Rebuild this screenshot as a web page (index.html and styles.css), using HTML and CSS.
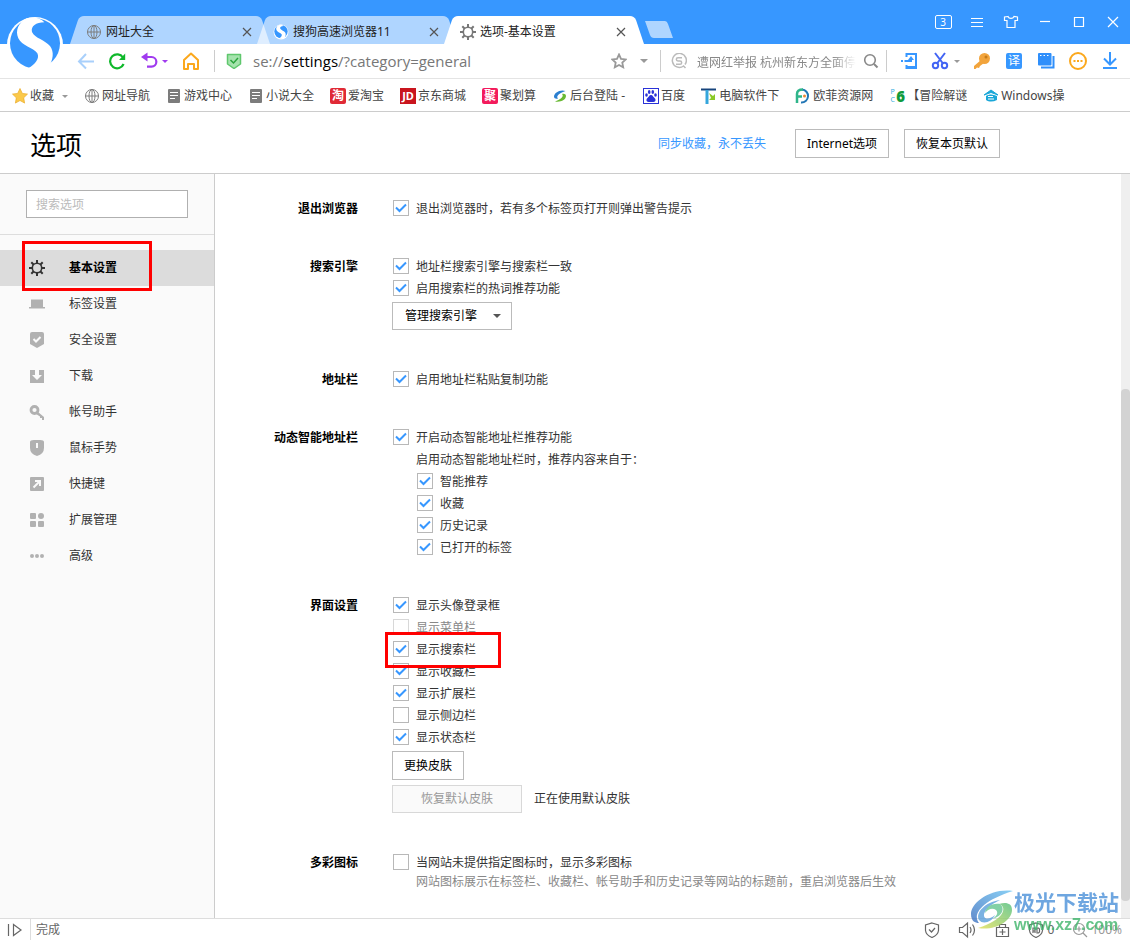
FILE: index.html
```html
<!DOCTYPE html>
<html lang="zh-CN">
<head>
<meta charset="utf-8">
<title>选项-基本设置</title>
<link rel="stylesheet" href="styles.css">
</head>
<body>
<svg class="defs" aria-hidden="true">
  <defs>
    <symbol id="globe" viewBox="0 0 16 16"><g fill="none" stroke="#7c7c7c"><circle cx="8" cy="8" r="6.500"/><ellipse cx="8" cy="8" rx="3" ry="6.500"/><path d="M8 1.500v13M1.500 8h13"/></g></symbol>
    <symbol id="close" viewBox="0 0 12 12"><path d="M2 2l8 8M10 2l-8 8" fill="none" stroke="#555" stroke-width="1.200"/></symbol>
    <symbol id="doc" viewBox="0 0 16 16"><rect x="2" y="1" width="12" height="14" rx="1" fill="#7c7c7c"/><path d="M4 4.500h8M4 7.500h8M4 10.500h5" stroke="#fff"/></symbol>
    <symbol id="caret" viewBox="0 0 8 6"><path d="M0 1h8L4 5z" fill="currentColor"/></symbol>
    <symbol id="gear" viewBox="0 0 16 16"><g fill="none" stroke="currentColor"><circle cx="8" cy="8" r="4.700" stroke-width="1.600"/><path d="M8 0v3M8 13v3M0 8h3M13 8h3M2.300 2.300l2.200 2.200M11.500 11.500l2.200 2.200M2.300 13.700l2.200-2.200M11.500 4.500l2.200-2.200" stroke-width="2"/></g></symbol>
    <symbol id="sogou" viewBox="15 15 180 180"><circle cx="105" cy="105" r="84" fill="#fff"/><circle cx="105" cy="100" r="75" fill="#3797ff"/><path d="M80 25C55 38 45 62 55 85c10 23 45 27 57 45 8 15-7 35-27 44l33 8 27-10c15-22 18-47 5-64-15-18-45-23-54-42-4-18 12-28 37-29-13-15-33-17-53-12z" fill="#fff"/></symbol>
  </defs>
</svg>
<div class="browser">
  <header class="titlebar">
    <nav class="tabs" aria-label="标签页">
      <div class="tab"><svg class="i16"><use href="#globe"/></svg><span>网址大全</span><button aria-label="关闭"><svg class="i12"><use href="#close"/></svg></button></div>
      <div class="tab"><svg class="i16"><use href="#sogou"/></svg><span>搜狗高速浏览器11</span><button aria-label="关闭"><svg class="i12"><use href="#close"/></svg></button></div>
      <div class="tab active"><svg class="i16"><use href="#gear"/></svg><span>选项-基本设置</span><button aria-label="关闭"><svg class="i12"><use href="#close"/></svg></button></div>
      <button class="newtab" aria-label="新建标签"></button>
    </nav>
    <div class="window-buttons">
      <button class="count"><span>3</span></button>
      <button aria-label="菜单"><svg class="i16" viewBox="0 0 16 16"><path d="M2 4.500h12M2 8.500h12M2 12.500h12"/></svg></button>
      <button aria-label="皮肤"><svg class="i16" viewBox="0 0 16 16"><path d="M5 2.500L1.500 3v3.500H4v7h8v-7h2.500V3L11 2.500C10 5 6 5 5 2.500z"/></svg></button>
      <button aria-label="最小化"><svg class="i16" viewBox="0 0 16 16"><path d="M3 7.500h10"/></svg></button>
      <button aria-label="最大化"><svg class="i16" viewBox="0 0 16 16"><path d="M3.500 3.500h9v9h-9z"/></svg></button>
      <button aria-label="关闭窗口"><svg class="i16" viewBox="0 0 16 16"><path d="M3 3l10 10M13 3L3 13"/></svg></button>
    </div>
  </header>
  <svg class="logo" viewBox="0 0 60 60"><use href="#sogou"/></svg>

  <div class="toolbar">
    <button class="nav" aria-label="后退"><svg class="i18" viewBox="0 0 18 18"><path d="M17 9.500H2M9 2L2 9.500l7 7" fill="none" stroke="#a9d0fb" stroke-width="2"/></svg></button>
    <button class="nav" aria-label="刷新"><svg class="i18" viewBox="0 0 18 18"><path d="M15.600 12A7 7 0 1 1 15 5.500" fill="none" stroke="#0fb82b" stroke-width="2.200"/><path d="M17.200 1.500V8H11z" fill="#0fb82b"/></svg></button>
    <button class="nav undo" aria-label="恢复"><svg class="i18" viewBox="0 0 18 18"><path d="M6 5h5.500a4.800 4.800 0 0 1 0 9.700H7" fill="none" stroke="#a03bef" stroke-width="2.200"/><path d="M1 5l6.500-4.500v9z" fill="#a03bef"/></svg><svg class="caret"><use href="#caret"/></svg></button>
    <button class="nav" aria-label="主页"><svg class="i18" viewBox="0 0 18 18"><path d="M2 8L9 1.500 16 8v9h-4v-5H6v5H2z" fill="none" stroke="#fba81d" stroke-width="2" stroke-linejoin="round"/></svg></button>
    <span class="rule"></span>
    <div class="address">
      <svg class="i16" viewBox="0 0 16 16"><path d="M1.500 1.500h13v9.500L8 15.500 1.500 11z" fill="#a5e3ad" stroke="#5fc76d" stroke-width="1.500" stroke-linejoin="round"/><path d="M4.500 7l3 3 4.500-5" fill="none" stroke="#2aa43c" stroke-width="1.500"/></svg>
      <div class="url" role="textbox" contenteditable="true" aria-label="地址" spellcheck="false">se://<b>settings</b>/?category=general</div>
      <button aria-label="收藏"><svg class="i16" viewBox="0 0 16 16"><path d="M8 1.500l2 4.300 4.700.6-3.400 3.200.9 4.700L8 12l-4.200 2.300.9-4.700L1.300 6.400 6 5.800z" fill="none" stroke="#999" stroke-width="1.800"/></svg></button>
      <button class="drop" aria-label="展开"><svg class="caret"><use href="#caret"/></svg></button>
    </div>
    <span class="rule"></span>
    <div class="search">
      <svg class="i16" viewBox="0 0 16 16"><path d="M14.500 15l-2-2A7 7 0 1 1 14 11.500M11 4.700H7a1.600 1.600 0 0 0 0 3.300h2a1.600 1.600 0 0 1 0 3.300H5" fill="none" stroke="#bbb" stroke-width="1.500"/></svg>
      <input type="text" aria-label="搜索" placeholder="遭网红举报 杭州新东方全面停课">
      <button aria-label="搜索"><svg class="i16" viewBox="0 0 16 16"><circle cx="7" cy="7" r="5.300" fill="none" stroke="#888" stroke-width="1.600"/><path d="M11 11l3.500 3.500" stroke="#888" stroke-width="2"/></svg></button>
    </div>
    <span class="rule"></span>
    <div class="extensions">
      <button aria-label="发送到手机"><svg class="i18" viewBox="0 0 18 18"><path d="M6.500 5V2H16v14H6.500v-3M6.500 15H16" fill="none" stroke="#3797ff" stroke-width="2"/><path d="M1 9h2M4.500 9H11V7" fill="none" stroke="#3797ff" stroke-width="2"/><path d="M8 8l3-4 3 4z" fill="#3797ff"/></svg></button>
      <button class="wide" aria-label="截图"><svg class="i18" viewBox="0 0 18 18"><path d="M4 1l8 10.500M14 1L6 11.500" stroke="#4264f4" stroke-width="2" fill="none"/><circle cx="4.500" cy="13.500" r="2.700" fill="none" stroke="#4264f4" stroke-width="2"/><circle cx="13.500" cy="13.500" r="2.700" fill="none" stroke="#4264f4" stroke-width="2"/></svg><svg class="caret"><use href="#caret"/></svg></button>
      <button aria-label="密码"><svg class="i18" viewBox="0 0 18 18"><circle cx="11.500" cy="6.500" r="5.500" fill="#f2a43c"/><path d="M8 8l3 3-4 3-1 2-2-.5-1.500 1.500H1V14z" fill="#f2a43c"/><circle cx="13" cy="5" r="1.500" fill="#c67b17"/></svg></button>
      <button aria-label="翻译"><span class="translate">译</span></button>
      <button aria-label="分屏"><svg class="i18" viewBox="0 0 18 18"><path d="M4 15.500h12.500V4" fill="none" stroke="#2f8ffb" stroke-width="2"/><rect x="1" y="1" width="13.500" height="12.500" rx="1" fill="#2f8ffb"/><path d="M3 3.500h1.500M6.500 3.500H8M10 3.500h1.500" stroke="#fff"/></svg></button>
      <button aria-label="更多"><svg class="i18" viewBox="0 0 18 18"><circle cx="9" cy="9" r="8" fill="none" stroke="#fba81d" stroke-width="2"/><path d="M4.500 9h2M8 9h2M11.500 9h2" stroke="#fba81d" stroke-width="2"/></svg></button>
      <button aria-label="下载"><svg class="i18" viewBox="0 0 18 18"><path d="M9 0v12M3 6.500l6 6 6-6M2 16h14" fill="none" stroke="#3797ff" stroke-width="2"/></svg></button>
    </div>
  </div>

  <nav class="bookmarks" aria-label="收藏栏">
    <a href="#"><svg class="i16" viewBox="0 0 16 16"><path d="M8 .5l2.300 4.900 5.200.7-3.800 3.700.9 5.300L8 12.500l-4.600 2.600.9-5.300L.5 6.100l5.200-.7z" fill="#fbc94a" stroke="#e9aa27" stroke-width=".7"/></svg>收藏<svg class="caret fold"><use href="#caret"/></svg></a>
    <a href="#"><svg class="i16"><use href="#globe"/></svg>网址导航</a>
    <a href="#"><svg class="i16"><use href="#doc"/></svg>游戏中心</a>
    <a href="#"><svg class="i16"><use href="#doc"/></svg>小说大全</a>
    <a href="#"><span class="fav tao">淘</span>爱淘宝</a>
    <a href="#"><span class="fav jd">JD</span>京东商城</a>
    <a href="#"><span class="fav ju">聚</span>聚划算</a>
    <a class="login" href="#"><svg class="i16" viewBox="0 0 16 16"><path d="M13.500 3C8 1 2 5 2 8.500c0 2 2 2.500 4 2-2-2 0-5 7.500-7.500z" fill="#2b7fd0"/><path d="M3 13.500c6 1 11-2 11-5.500 0-2-2-2.500-4-2 2 2 0 5-7 7.500z" fill="#69b934"/></svg>后台登陆 -</a>
    <a href="#"><svg class="i16" viewBox="0 0 16 16"><rect x=".5" y=".5" width="15" height="15" fill="#fff" stroke="#2a32d8"/><g fill="#2a32d8"><ellipse cx="3.500" cy="7" rx="1.300" ry="1.800"/><ellipse cx="6.200" cy="4" rx="1.300" ry="1.900"/><ellipse cx="9.800" cy="4" rx="1.300" ry="1.900"/><ellipse cx="12.500" cy="7" rx="1.300" ry="1.800"/><path d="M8 7c2 0 2 2 3.500 3s1.500 4-1 4H5.500c-2.500 0-2.500-3-1-4S6 7 8 7z"/></g></svg>百度</a>
    <a href="#"><svg class="i16" viewBox="0 0 16 16"><path d="M0 1.500h15" stroke="#17447c" stroke-width="2"/><path d="M6 2v14" stroke="#35a6dc" stroke-width="3"/><path d="M8 5l4 3 2-2v6H8l2-2z" fill="#8bc926"/></svg>电脑软件下</a>
    <a href="#"><svg class="i16" viewBox="0 0 16 16"><path d="M7 1.500a6.500 6.500 0 1 1-1 13" fill="none" stroke="#2276b5" stroke-width="2"/><path d="M2 15V6c0-4 3-4.500 6-4.500M2 8.500h5" fill="none" stroke="#2fb58a" stroke-width="2.500"/><circle cx="9.500" cy="8" r="1.500" fill="#f08735"/></svg>欧菲资源网</a>
    <a href="#"><span class="fav pc"><small>P<br>C</small><b>6</b></span>【冒险解谜</a>
    <a href="#"><svg class="i16" viewBox="0 0 16 16"><path d="M1 7l7-5 7 5-7-2.500z" fill="#1aa7d8" stroke="#1aa7d8"/><path d="M3 8c3-2 7-2 11 0v4c-4 2-8 2-11 0z" fill="#1aa7d8"/><path d="M5 8.500h5M5 11h6" stroke="#fff"/></svg>Windows操</a>
  </nav>

  <div class="page-head">
    <h1>选项</h1>
    <a href="#">同步收藏，永不丢失</a>
    <button class="btn">Internet选项</button>
    <button class="btn">恢复本页默认</button>
  </div>

  <div class="body">
    <aside class="sidebar">
      <div class="find"><input type="text" placeholder="搜索选项" aria-label="搜索选项"></div>
      <nav class="menu" aria-label="选项分类">
        <a class="current" href="#"><svg class="i16"><use href="#gear"/></svg>基本设置<i class="mark"></i></a>
        <a href="#"><svg class="i16" viewBox="0 0 16 16"><path d="M2 3.500h12v7.500h2v1.500H0V11h2z"/></svg>标签设置</a>
        <a href="#"><svg class="i16" viewBox="0 0 16 16"><path d="M1 2q0-2 2-2h10q2 0 2 2v10l-7 4-7-4z"/><path class="cut" d="M4.500 7L7 9.500 11.500 5"/></svg>安全设置</a>
        <a href="#"><svg class="i16" viewBox="0 0 16 16"><path d="M1 2h14v13H1z"/><path d="M6 2h4v5h3l-5 5-5-5h3z" fill="#fafafa"/></svg>下载</a>
        <a href="#"><svg class="i16" viewBox="0 0 16 16"><circle cx="5.500" cy="6" r="3.500" fill="none" stroke="#b1b1b1" stroke-width="2.800"/><path d="M7 10l2-2 6 5v3h-2v-2h-2v-1.500z"/></svg>帐号助手</a>
        <a href="#"><svg class="i16" viewBox="0 0 16 16"><path d="M1 2q0-2 4-2h6q4 0 4 2v6q0 6-7 8-7-2-7-8z"/><path class="cut" d="M8 3v5"/></svg>鼠标手势</a>
        <a href="#"><svg class="i16" viewBox="0 0 16 16"><rect x="1" y="1" width="14" height="14" rx="1"/><path class="cut" d="M4.500 11.500L10.500 5.500M6 5h5v5"/></svg>快捷键</a>
        <a href="#"><svg class="i16" viewBox="0 0 16 16"><rect x="1" y="1" width="6" height="6" rx="1"/><circle cx="12" cy="4" r="3"/><rect x="1" y="9" width="6" height="6" rx="1"/><rect x="9" y="9" width="6" height="6" rx="1"/></svg>扩展管理</a>
        <a href="#"><svg class="i16" viewBox="0 0 16 16"><circle cx="3" cy="8" r="2"/><circle cx="8" cy="8" r="2"/><circle cx="13" cy="8" r="2"/></svg>高级</a>
      </nav>
    </aside>

    <main class="settings">
      <section><h2>退出浏览器</h2><div>
        <label><input type="checkbox" checked>退出浏览器时，若有多个标签页打开则弹出警告提示</label>
      </div></section>
      <section><h2>搜索引擎</h2><div>
        <label><input type="checkbox" checked>地址栏搜索引擎与搜索栏一致</label>
        <label><input type="checkbox" checked>启用搜索栏的热词推荐功能</label>
        <select class="engine" aria-label="管理搜索引擎"><option>管理搜索引擎</option></select>
      </div></section>
      <section><h2>地址栏</h2><div>
        <label><input type="checkbox" checked>启用地址栏粘贴复制功能</label>
      </div></section>
      <section><h2>动态智能地址栏</h2><div>
        <label><input type="checkbox" checked>开启动态智能地址栏推荐功能</label>
        <div class="sub">
          <p>启用动态智能地址栏时，推荐内容来自于：</p>
          <label><input type="checkbox" checked>智能推荐</label>
          <label><input type="checkbox" checked>收藏</label>
          <label><input type="checkbox" checked>历史记录</label>
          <label><input type="checkbox" checked>已打开的标签</label>
        </div>
      </div></section>
      <section><h2>界面设置</h2><div>
        <label><input type="checkbox" checked>显示头像登录框</label>
        <label class="off"><input type="checkbox" disabled>显示菜单栏</label>
        <label><input type="checkbox" checked>显示搜索栏<i class="mark"></i></label>
        <label><input type="checkbox" checked>显示收藏栏</label>
        <label><input type="checkbox" checked>显示扩展栏</label>
        <label><input type="checkbox">显示侧边栏</label>
        <label><input type="checkbox" checked>显示状态栏</label>
        <button class="btn skin">更换皮肤</button>
        <div class="reset"><button class="btn" disabled>恢复默认皮肤</button><span>正在使用默认皮肤</span></div>
      </div></section>
      <section><h2>多彩图标</h2><div>
        <label><input type="checkbox">当网站未提供指定图标时，显示多彩图标</label>
        <p class="note">网站图标展示在标签栏、收藏栏、帐号助手和历史记录等网站的标题前，重启浏览器后生效</p>
      </div></section>
    </main>
    <div class="scrollbar"><span></span></div>
  </div>

  <footer class="status">
    <button class="panel" aria-label="侧边栏"><svg class="i16" viewBox="0 0 16 16"><path d="M1.500 2v12M6.500 2.500l7.500 5.500-7.500 5.500z"/></svg></button>
    <span class="state">完成</span>
    <svg class="i16" viewBox="0 0 16 16"><path d="M8 1l6.500 2v5.500Q14 13 8 15.500 2 13 1.500 8.500V3zM5 7.500L7.500 10 11 6"/></svg>
    <svg class="i18" viewBox="0 0 18 18"><path d="M1.500 6.500h3l5-4.500v14l-5-4.500h-3zM12 6q2 3 0 6M14.500 3.500q4 5.500 0 11"/></svg>
    <svg class="i16" viewBox="0 0 16 16"><path d="M2.500 5.500h12v9h-12zM5.500 5.500v-3h6v3M5.500 10h6M8.500 7v6"/></svg>
    <span class="pair"><svg class="i16" viewBox="0 0 16 16"><path d="M8 1l6.500 2v5.500Q14 13 8 15.500 2 13 1.500 8.500V3zM5 11V6h2v5M5 9h2M9 6v5h1.500l1-1V7l-1-1z"/></svg>0</span>
    <span class="pair zoom"><svg class="i16" viewBox="0 0 16 16"><path d="M12.500 7a5.500 5.500 0 1 1-11 0 5.500 5.500 0 1 1 11 0M11 11l4 4M4.500 7h5M7 4.500v5"/></svg>100%</span>
  </footer>

  <div class="watermark">
    <svg viewBox="0 0 44 42">
      <defs>
        <linearGradient id="wb" x1="0" y1="1" x2="1" y2="0"><stop offset="0" stop-color="#3a6fc0"/><stop offset="1" stop-color="#6dc4f2"/></linearGradient>
        <linearGradient id="wg" x1="0" y1="1" x2="1" y2="0"><stop offset="0" stop-color="#e3df55"/><stop offset="1" stop-color="#4fbf7c"/></linearGradient>
      </defs>
      <path d="M43 2C20-1 1 14 1 25c0 7 4 9 8 9-6-7-1-21 34-32z" fill="url(#wb)"/>
      <path d="M30 11C15 13 5 24 9 31c4 5 13 2 16-5-4 4-10 5-11 1-1-5 7-12 16-16z" fill="#5a9fdc"/>
      <path d="M8 39c17 3 34-7 34-18 0-7-6-8-13-6 9 3 5 16-21 24z" fill="url(#wg)"/>
      <path d="M30 15c-9-1-14 3-15 9 4-5 8-5 11-3 3 3 0 7-4 9 9-2 14-10 8-15z" fill="#65c690"/>
    </svg>
    <div><strong>极光下载站</strong><em>www.xz7.com</em></div>
  </div>
</div>
</body>
</html>
```
FILE: styles.css
```css
* { box-sizing: border-box; }
body {
  margin: 0;
  font: 12px/22px "Noto Sans", "Noto Sans CJK SC", sans-serif;
  color: #333;
  background: #fff;
}
button, input, select { font: inherit; color: inherit; margin: 0; }
button { padding: 0; border: 0; background: none; display: flex; align-items: center; justify-content: center; }
a { color: inherit; text-decoration: none; }
h1, h2, p { margin: 0; }
svg { flex: none; display: block; }
.defs { position: absolute; width: 0; height: 0; }
.i12 { width: 12px; height: 12px; }
.i16 { width: 16px; height: 16px; }
.i18 { width: 18px; height: 18px; }
.caret { width: 6px; height: 5px; color: #999; }

.browser { position: relative; display: flex; flex-direction: column; height: 100vh; overflow: hidden; }

/* title bar */
.titlebar { flex: none; display: flex; align-items: flex-end; justify-content: space-between; height: 44px; padding-left: 70px; background: #3797ff; }
.tabs { display: flex; align-items: flex-end; }
.tab {
  display: flex; align-items: center; gap: 4px;
  width: 200px; height: 28px; padding: 3px 17px 0 16px;
  background: rgba(255, 255, 255, .6);
  clip-path: path("M0 28L8 4Q10 0 14 0H186Q190 0 192 4L200 28Z");
  color: #222;
}
.tab + .tab { margin-left: -13px; }
.tab.active { background: #fff; position: relative; }
.tab.active .i16 { color: #777; }
.tab span { flex: 1; white-space: nowrap; }
.newtab { width: 28px; height: 17px; margin: 0 0 6px 1px; background: #afd5ff; clip-path: path("M0 0H20Q22 0 23 3L28 17H9Q6 17 5 14Z"); }
.window-buttons { display: flex; height: 44px; }
.window-buttons button { width: 34px; }
.window-buttons svg { fill: none; stroke: #fff; stroke-width: 1.200; }
.window-buttons .count span { width: 17px; height: 14px; border: 1px solid #fff; border-radius: 2px; color: #fff; font-size: 10px; line-height: 12px; }
.logo { position: absolute; left: 5px; top: 15px; width: 60px; height: 60px; z-index: 2; }

/* toolbar */
.toolbar { flex: none; display: flex; align-items: center; height: 35px; padding: 0 4px 0 71px; border-bottom: 1px solid #e4e4e4; }
.nav { width: 30px; height: 30px; margin-right: 1px; }
.undo { width: 42px; gap: 4px; color: #a03bef; }
.undo .caret { color: #a03bef; }
.rule { width: 1px; height: 22px; margin-left: 7px; background: #ccc; }
.address { flex: 1; display: flex; align-items: center; min-width: 0; padding-left: 11px; }
.url { flex: 1; margin-left: 11px; font-family: "Open Sans", "Noto Sans", sans-serif; font-size: 15px; color: #777; white-space: nowrap; outline: 0; }
.url b { font-weight: 400; color: #000; }
.drop { width: 16px; margin: 0 1px 0 9px; }
.drop .caret { width: 8px; height: 6px; }
.search { display: flex; align-items: center; width: 218px; padding-left: 10px; }
.search input { flex: 1; min-width: 0; height: 24px; padding: 2px 0 0; border: 0; outline: 0; margin: 0 7px 0 10px; background: none; mask-image: linear-gradient(90deg, #000 85%, transparent); }
.search input::placeholder { color: #888; opacity: 1; }
.extensions { display: flex; margin-left: 6px; }
.extensions button { width: 32px; height: 30px; }
.extensions .wide { width: 41px; gap: 5px; }
.translate { width: 16px; height: 16px; border-radius: 2px; background: #3797ff; color: #fff; line-height: 16px; }

/* bookmarks */
.bookmarks { flex: none; display: flex; align-items: center; gap: 16px; height: 33px; padding: 2px 0 0 12px; border-bottom: 1px solid #ccc; white-space: nowrap; color: #444; }
.bookmarks a { display: flex; align-items: center; gap: 2px; }
.bookmarks .login { padding-right: 2px; }
.fold { margin-left: 6px; }
.fav { width: 16px; height: 16px; border-radius: 2px; color: #fff; line-height: 16px; text-align: center; font-weight: 700; }
.tao { background: #e02a36; }
.jd { background: #c9151e; border-radius: 0; font-size: 11px; }
.ju { background: #f31b5c; }
.pc { display: flex; align-items: center; color: #109a3c; font-size: 15px; }
.pc small { width: 7px; font-size: 7px; line-height: 8px; font-weight: 400; color: #35aee0; }

/* options header */
.page-head { flex: none; display: flex; align-items: center; height: 62px; padding: 2px 130px 0 30px; border-bottom: 1px solid #ccc; }
.page-head h1 { flex: 1; font-size: 26px; line-height: 36px; font-weight: 400; color: #000; padding-top: 2px; }
.page-head a { color: #3797ff; margin-right: 14px; }
.page-head .btn { margin-left: 15px; }
.btn { height: 29px; padding: 0 11px; border: 1px solid #bbb; background: #fff; color: #000; white-space: nowrap; }
.btn:disabled { height: 28px; border-color: #d8d8d8; background: #fafafa; color: #999; }

/* sidebar */
.body { flex: 1; display: flex; min-height: 0; }
.sidebar { flex: none; width: 215px; background: #fafafa; border-right: 1px solid #ccc; }
.find { padding: 16px 26px; border-bottom: 1px solid #ddd; }
.find input { display: block; width: 100%; height: 28px; padding: 0 9px; border: 1px solid #b0b0b0; background: #fff; outline: 0; }
.find input::placeholder { color: #bbb; opacity: 1; }
.menu { padding-top: 15px; }
.menu a { position: relative; display: flex; align-items: center; gap: 24px; height: 36px; padding-left: 29px; }
.menu svg { fill: #b1b1b1; }
.menu .cut { fill: none; stroke: #fafafa; stroke-width: 2; }
.menu .current { background: #dcdcdc; color: #000; font-weight: 700; }
.menu .current svg { color: #333; }
.mark { position: absolute; border: 3px solid #f00; z-index: 1; pointer-events: none; }
.menu .mark { left: 22px; top: -9px; width: 130px; height: 50px; }

/* settings */
.settings { flex: 1; min-width: 0; padding-top: 23px; overflow: hidden; display: flex; flex-direction: column; gap: 36px; }
.settings section { display: grid; grid-template-columns: 143px 1fr; column-gap: 34px; }
.settings h2 { height: 22px; font-size: 12px; line-height: 24px; text-align: right; color: #000; }
.settings label { position: relative; display: flex; align-items: flex-start; gap: 7px; width: max-content; height: 22px; padding-left: 1px; line-height: 24px; }
.settings input { appearance: none; width: 16px; height: 16px; margin-top: 3px; border: 1px solid #b8b8b8; background: #fff; }
.settings input:checked { background: url("data:image/svg+xml,%3Csvg xmlns='http://www.w3.org/2000/svg' viewBox='0 0 14 14'%3E%3Cpath d='M2 6.500l3.500 3.500L12 3.500' fill='none' stroke='%233797ff' stroke-width='2'/%3E%3C/svg%3E") center / 14px 14px no-repeat; }
.settings .off { color: #888; }
.settings .off input { border-color: #d8d8d8; }
.settings .mark { left: -7px; top: -6px; width: 116px; height: 36px; }
.sub { padding-left: 24px; }
.sub p { height: 22px; line-height: 24px; }
.engine { appearance: none; display: block; width: 120px; height: 28px; margin: 3px 0 2px; padding: 0 12px; border: 1px solid #bbb; border-radius: 0; color: #000; background: #fff url("data:image/svg+xml,%3Csvg xmlns='http://www.w3.org/2000/svg' viewBox='0 0 8 5'%3E%3Cpath d='M0 0h8L4 4z' fill='%23555'/%3E%3C/svg%3E") right 10px center / 8px 5px no-repeat; }
.skin { margin: 3px 0 5px; }
.reset { display: flex; align-items: center; gap: 12px; margin-bottom: 2px; }
.reset .btn { width: 130px; }
.note { padding-left: 24px; line-height: 18px; color: #888; }
.scrollbar { flex: none; width: 9px; background: #efefef; display: flex; flex-direction: column; }
.scrollbar::before { content: ""; flex: 215; }
.scrollbar::after { content: ""; flex: 17; }
.scrollbar span { flex: 512; border-radius: 4px; background: #d3d3d3; }

/* status bar */
.status { flex: none; display: flex; align-items: center; gap: 18px; height: 22px; padding-right: 8px; border-top: 1px solid #ddd; color: #666; }
.status svg { fill: none; stroke: #666; stroke-width: 1.200; }
.status .panel { width: 31px; height: 21px; border-right: 1px solid #ddd; }
.status .state { flex: 1; margin-left: -13px; }
.pair { display: flex; align-items: center; gap: 4px; }
.status .zoom { gap: 3px; color: #999; }
.zoom svg { stroke: #999; }

.watermark { position: absolute; right: 11px; bottom: 5px; z-index: 3; display: flex; align-items: flex-end; opacity: .8; pointer-events: none; }
.watermark svg { width: 44px; height: 42px; margin-bottom: 4px; }
.watermark strong, .watermark em { display: block; font-style: normal; font-weight: 700; white-space: nowrap; }
.watermark strong { font-size: 21px; line-height: 26px; color: #4a90d9; }
.watermark em { font-family: "Liberation Sans", sans-serif; font-size: 16px; line-height: 20px; color: #3fb56b; }
```
